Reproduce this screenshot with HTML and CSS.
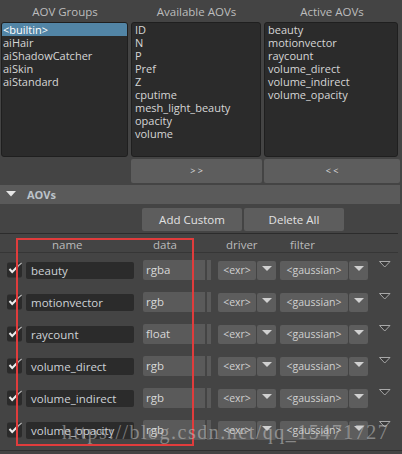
FILE: index.html
```html
<!DOCTYPE html>
<html>
<head>
<meta charset="utf-8">
<link rel="stylesheet" href="styles.css">
</head>
<body>
<div class="app">
  <div class="top">
    <div class="col col1">
      <div class="col-title">AOV Groups</div>
      <div class="list">
        <div class="item sel">&lt;builtin&gt;</div>
        <div class="item">aiHair</div>
        <div class="item">aiShadowCatcher</div>
        <div class="item">aiSkin</div>
        <div class="item">aiStandard</div>
      </div>
    </div>
    <div class="col col2">
      <div class="col-title">Available AOVs</div>
      <div class="list">
        <div class="item">ID</div>
        <div class="item">N</div>
        <div class="item">P</div>
        <div class="item">Pref</div>
        <div class="item">Z</div>
        <div class="item">cputime</div>
        <div class="item">mesh_light_beauty</div>
        <div class="item">opacity</div>
        <div class="item">volume</div>
      </div>
      <div class="move-btn">&gt; &gt;</div>
    </div>
    <div class="col col3">
      <div class="col-title">Active AOVs</div>
      <div class="list">
        <div class="item">beauty</div>
        <div class="item">motionvector</div>
        <div class="item">raycount</div>
        <div class="item">volume_direct</div>
        <div class="item">volume_indirect</div>
        <div class="item">volume_opacity</div>
      </div>
      <div class="move-btn">&lt; &lt;</div>
    </div>
  </div>

  <div class="section-bar">
    <svg class="section-tri" width="10" height="6" viewBox="0 0 10 6"><polygon points="0,0 10,0 5,5.5" fill="#e6e6e6"/></svg>
    <span class="section-title">AOVs</span>
  </div>

  <div class="actions">
    <div class="action-btn">Add Custom</div>
    <div class="action-btn">Delete All</div>
  </div>

  <div class="table-head">
    <span class="h-check"></span>
    <span class="h-name">name</span>
    <span class="h-data">data</span>
    <span class="h-driver">driver</span>
    <span class="h-filter">filter</span>
    <span></span>
  </div>

  <div class="rows">
    <div class="row">
      <svg class="check" width="17" height="16" viewBox="0 0 17 16"><rect x="0" y="0.5" width="15" height="15" rx="2" fill="#2b2b2b"/><path d="M2.5 7 L5.2 10 L11 4" stroke="#ececec" stroke-width="2" fill="none"/><path d="M11 4 L14.6 1" stroke="#b8b8b8" stroke-width="1.2" fill="none"/></svg>
      <div class="name-field">beauty</div>
      <div class="data-combo"><div class="data-val">rgba</div><div class="data-stub"></div></div>
      <div class="combo driver"><div class="combo-val">&lt;exr&gt;</div><div class="combo-arr"><svg width="10" height="6" viewBox="0 0 10 6"><polygon points="0,0 10,0 5,5" fill="#d0d0d0"/></svg></div></div>
      <div class="combo filter"><div class="combo-val">&lt;gaussian&gt;</div><div class="combo-arr"><svg width="10" height="6" viewBox="0 0 10 6"><polygon points="0,0 10,0 5,5" fill="#d0d0d0"/></svg></div></div>
      <svg class="row-menu" width="12" height="7" viewBox="0 0 12 7"><polygon points="0.5,0.5 11,0.5 5.75,6" fill="#3a3a3a" stroke="#a8a8a8" stroke-width="1"/></svg>
    </div>
    <div class="row">
      <svg class="check" width="17" height="16" viewBox="0 0 17 16"><rect x="0" y="0.5" width="15" height="15" rx="2" fill="#2b2b2b"/><path d="M2.5 7 L5.2 10 L11 4" stroke="#ececec" stroke-width="2" fill="none"/><path d="M11 4 L14.6 1" stroke="#b8b8b8" stroke-width="1.2" fill="none"/></svg>
      <div class="name-field">motionvector</div>
      <div class="data-combo"><div class="data-val">rgb</div><div class="data-stub"></div></div>
      <div class="combo driver"><div class="combo-val">&lt;exr&gt;</div><div class="combo-arr"><svg width="10" height="6" viewBox="0 0 10 6"><polygon points="0,0 10,0 5,5" fill="#d0d0d0"/></svg></div></div>
      <div class="combo filter"><div class="combo-val">&lt;gaussian&gt;</div><div class="combo-arr"><svg width="10" height="6" viewBox="0 0 10 6"><polygon points="0,0 10,0 5,5" fill="#d0d0d0"/></svg></div></div>
      <svg class="row-menu" width="12" height="7" viewBox="0 0 12 7"><polygon points="0.5,0.5 11,0.5 5.75,6" fill="#3a3a3a" stroke="#a8a8a8" stroke-width="1"/></svg>
    </div>
    <div class="row">
      <svg class="check" width="17" height="16" viewBox="0 0 17 16"><rect x="0" y="0.5" width="15" height="15" rx="2" fill="#2b2b2b"/><path d="M2.5 7 L5.2 10 L11 4" stroke="#ececec" stroke-width="2" fill="none"/><path d="M11 4 L14.6 1" stroke="#b8b8b8" stroke-width="1.2" fill="none"/></svg>
      <div class="name-field">raycount</div>
      <div class="data-combo"><div class="data-val">float</div><div class="data-stub"></div></div>
      <div class="combo driver"><div class="combo-val">&lt;exr&gt;</div><div class="combo-arr"><svg width="10" height="6" viewBox="0 0 10 6"><polygon points="0,0 10,0 5,5" fill="#d0d0d0"/></svg></div></div>
      <div class="combo filter"><div class="combo-val">&lt;gaussian&gt;</div><div class="combo-arr"><svg width="10" height="6" viewBox="0 0 10 6"><polygon points="0,0 10,0 5,5" fill="#d0d0d0"/></svg></div></div>
      <svg class="row-menu" width="12" height="7" viewBox="0 0 12 7"><polygon points="0.5,0.5 11,0.5 5.75,6" fill="#3a3a3a" stroke="#a8a8a8" stroke-width="1"/></svg>
    </div>
    <div class="row">
      <svg class="check" width="17" height="16" viewBox="0 0 17 16"><rect x="0" y="0.5" width="15" height="15" rx="2" fill="#2b2b2b"/><path d="M2.5 7 L5.2 10 L11 4" stroke="#ececec" stroke-width="2" fill="none"/><path d="M11 4 L14.6 1" stroke="#b8b8b8" stroke-width="1.2" fill="none"/></svg>
      <div class="name-field">volume_direct</div>
      <div class="data-combo"><div class="data-val">rgb</div><div class="data-stub"></div></div>
      <div class="combo driver"><div class="combo-val">&lt;exr&gt;</div><div class="combo-arr"><svg width="10" height="6" viewBox="0 0 10 6"><polygon points="0,0 10,0 5,5" fill="#d0d0d0"/></svg></div></div>
      <div class="combo filter"><div class="combo-val">&lt;gaussian&gt;</div><div class="combo-arr"><svg width="10" height="6" viewBox="0 0 10 6"><polygon points="0,0 10,0 5,5" fill="#d0d0d0"/></svg></div></div>
      <svg class="row-menu" width="12" height="7" viewBox="0 0 12 7"><polygon points="0.5,0.5 11,0.5 5.75,6" fill="#3a3a3a" stroke="#a8a8a8" stroke-width="1"/></svg>
    </div>
    <div class="row">
      <svg class="check" width="17" height="16" viewBox="0 0 17 16"><rect x="0" y="0.5" width="15" height="15" rx="2" fill="#2b2b2b"/><path d="M2.5 7 L5.2 10 L11 4" stroke="#ececec" stroke-width="2" fill="none"/><path d="M11 4 L14.6 1" stroke="#b8b8b8" stroke-width="1.2" fill="none"/></svg>
      <div class="name-field">volume_indirect</div>
      <div class="data-combo"><div class="data-val">rgb</div><div class="data-stub"></div></div>
      <div class="combo driver"><div class="combo-val">&lt;exr&gt;</div><div class="combo-arr"><svg width="10" height="6" viewBox="0 0 10 6"><polygon points="0,0 10,0 5,5" fill="#d0d0d0"/></svg></div></div>
      <div class="combo filter"><div class="combo-val">&lt;gaussian&gt;</div><div class="combo-arr"><svg width="10" height="6" viewBox="0 0 10 6"><polygon points="0,0 10,0 5,5" fill="#d0d0d0"/></svg></div></div>
      <svg class="row-menu" width="12" height="7" viewBox="0 0 12 7"><polygon points="0.5,0.5 11,0.5 5.75,6" fill="#3a3a3a" stroke="#a8a8a8" stroke-width="1"/></svg>
    </div>
    <div class="row">
      <svg class="check" width="17" height="16" viewBox="0 0 17 16"><rect x="0" y="0.5" width="15" height="15" rx="2" fill="#2b2b2b"/><path d="M2.5 7 L5.2 10 L11 4" stroke="#ececec" stroke-width="2" fill="none"/><path d="M11 4 L14.6 1" stroke="#b8b8b8" stroke-width="1.2" fill="none"/></svg>
      <div class="name-field">volume_opacity</div>
      <div class="data-combo"><div class="data-val">rgb</div><div class="data-stub"></div></div>
      <div class="combo driver"><div class="combo-val">&lt;exr&gt;</div><div class="combo-arr"><svg width="10" height="6" viewBox="0 0 10 6"><polygon points="0,0 10,0 5,5" fill="#d0d0d0"/></svg></div></div>
      <div class="combo filter"><div class="combo-val">&lt;gaussian&gt;</div><div class="combo-arr"><svg width="10" height="6" viewBox="0 0 10 6"><polygon points="0,0 10,0 5,5" fill="#d0d0d0"/></svg></div></div>
      <svg class="row-menu" width="12" height="7" viewBox="0 0 12 7"><polygon points="0.5,0.5 11,0.5 5.75,6" fill="#3a3a3a" stroke="#a8a8a8" stroke-width="1"/></svg>
    </div>
  </div>
  <div class="bottom-line"></div>

  <div class="redbox"></div>
  <div class="watermark">https://blog.csdn.net/qq_15471727</div>
</div>
</body>
</html>
```

FILE: styles.css
```css
html, body {
  margin: 0;
  padding: 0;
  background: #444444;
}
body {
  width: 402px;
  height: 454px;
  overflow: hidden;
  font-family: "Open Sans", "Noto Sans", sans-serif;
  color: #d0d0d0;
}
.app {
  position: relative;
  width: 402px;
  height: 454px;
}

/* top three lists */
.top {
  display: flex;
  gap: 2px;
  padding-left: 1px;
  height: 183px;
}
.col {
  display: flex;
  flex-direction: column;
}
.col1 { width: 128px; }
.col2 { width: 131px; }
.col3 { width: 136px; }
.col-title {
  height: 22px;
  box-sizing: border-box;
  padding-top: 5px;
  font-size: 11.5px;
  line-height: 14px;
  text-align: center;
  color: #bdbdbd;
}
.list {
  height: 135px;
  box-sizing: border-box;
  background: #2b2b2b;
  border: 1px solid #1f1f1f;
  border-radius: 3px;
  overflow: hidden;
}
.col1 .list { width: 127px; }
.col2 .list { width: 130px; }
.col3 .list { width: 134px; }
.item {
  height: 13px;
  line-height: 13px;
  font-size: 11px;
  padding-left: 3px;
  color: #d6d6d6;
  white-space: nowrap;
}
.col1 .item { padding-left: 1px; }
.item.sel {
  background: #5285a6;
  color: #ffffff;
}
.move-btn {
  margin-top: 2px;
  height: 24px;
  background: #5d5d5d;
  border-radius: 2px;
  font-size: 9px;
  line-height: 24px;
  text-align: center;
  color: #dddddd;
}

/* section bar */
.section-bar {
  margin-top: 2px;
  height: 19px;
  width: 400px;
  background: #5a5a5a;
  display: flex;
  align-items: center;
}
.section-tri {
  margin-left: 6px;
  margin-top: -2px;
}
.section-title {
  margin-left: 11px;
  font-weight: bold;
  font-size: 11px;
  color: #bcc3ca;
}

/* action buttons */
.actions {
  display: flex;
  gap: 2px;
  padding-top: 4px;
  padding-left: 142px;
}
.action-btn {
  width: 100px;
  height: 23px;
  background: #5d5d5d;
  border-radius: 2px;
  font-size: 11.5px;
  line-height: 23px;
  text-align: center;
  color: #e2e2e2;
}

/* table */
.table-head,
.row {
  display: grid;
  grid-template-columns: 19px 117px 75px 62px 99px 12px;
  padding-left: 7px;
}
.table-head {
  margin-top: 2px;
  border-top: 1px solid #2c2c2c;
  width: 391px;
  height: 18px;
  border-bottom: 1px solid #363636;
  font-size: 11.5px;
  line-height: 14px;
  color: #bbbbbb;
}
.table-head span { padding-top: 4px; }
.h-name { padding-left: 26px; }
.h-data { padding-left: 10px; }
.h-driver { padding-left: 8px; }
.h-filter { padding-left: 10px; }

.rows {
  padding-top: 1px;
}
.row {
  height: 32px;
  align-items: center;
}
.check {
  display: block;
}
.name-field {
  width: 108px;
  height: 17px;
  box-sizing: border-box;
  background: #2b2b2b;
  border-radius: 2px;
  padding-left: 5px;
  font-size: 11.5px;
  line-height: 17px;
  color: #cdd2d7;
}
.data-combo {
  display: flex;
  gap: 2px;
  height: 20px;
}
.data-val {
  width: 62px;
  box-sizing: border-box;
  background: #5a5a5a;
  border-radius: 2px 0 0 2px;
  padding-left: 3px;
  font-size: 11.5px;
  line-height: 20px;
  color: #d8d8d8;
}
.data-stub {
  width: 4px;
  background: #5a5a5a;
}
.combo {
  display: flex;
  gap: 1px;
  height: 19px;
}
.combo-val {
  background: #5d5d5d;
  border-radius: 2px;
  font-size: 10.5px;
  line-height: 19px;
  text-align: center;
  color: #d0d0d0;
  white-space: nowrap;
}
.driver .combo-val { width: 38px; }
.filter .combo-val { width: 68px; }
.combo-arr {
  width: 19px;
  background: #5d5d5d;
  border-radius: 2px;
  display: flex;
  align-items: center;
  justify-content: center;
}
.combo-arr svg { display: block; margin-top: -2px; }
.row-menu {
  align-self: start;
  margin-top: 7px;
  display: block;
}
.bottom-line {
  margin-top: 4px;
  border-top: 1px solid #303030;
  width: 402px;
}

/* overlays */
.redbox {
  position: absolute;
  left: 16px;
  top: 238px;
  width: 178px;
  height: 208px;
  box-sizing: border-box;
  border: 2px solid #e03c3c;
}
.watermark {
  position: absolute;
  left: 62px;
  top: 421px;
  font-family: "Liberation Serif", serif;
  font-size: 20px;
  line-height: 22px;
  letter-spacing: 1.5px;
  color: rgba(205, 205, 205, 0.5);
  white-space: nowrap;
}
```
